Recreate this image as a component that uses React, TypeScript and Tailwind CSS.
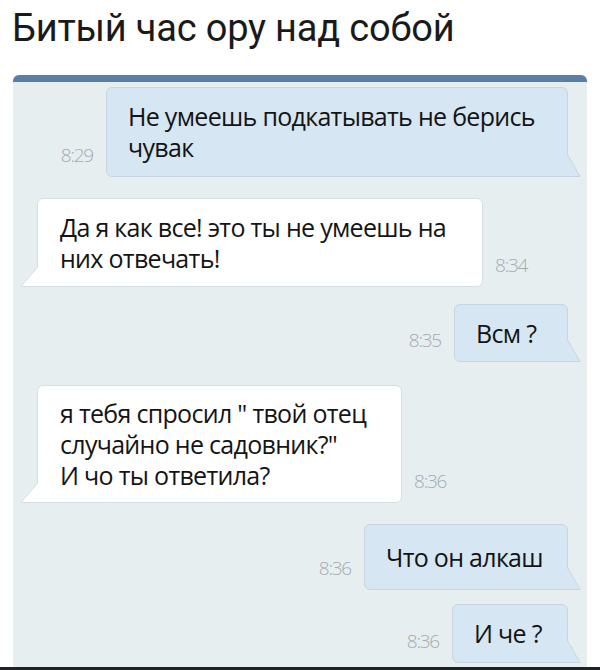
type Msg = {
  text: string[]
  time: string
  out: boolean
  w: string
  h: string
  mt: string
}

const messages: Msg[] = [
  { text: ['Не умеешь подкатывать не берись', 'чувак'], time: '8:29', out: true, w: 'w-[462px]', h: 'h-[90px]', mt: 'mt-0' },
  { text: ['Да я как все! это ты не умеешь на', 'них отвечать!'], time: '8:34', out: false, w: 'w-[446px]', h: 'h-[89px]', mt: 'mt-[21px]' },
  { text: ['Всм ?'], time: '8:35', out: true, w: 'w-[114px]', h: 'h-[58px]', mt: 'mt-[17px]' },
  { text: ['я тебя спросил " твой отец', 'случайно не садовник?"', 'И чо ты ответила?'], time: '8:36', out: false, w: 'w-[365px]', h: 'h-[118px]', mt: 'mt-[23px]' },
  { text: ['Что он алкаш'], time: '8:36', out: true, w: 'w-[204px]', h: 'h-[66px]', mt: 'mt-[21px]' },
  { text: ['И че ?'], time: '8:36', out: true, w: 'w-[116px]', h: 'h-[59px]', mt: 'mt-[14px]' },
]

function Time({ value }: { value: string }) {
  return (
    <div className="pb-[11px] text-[19px] leading-[22px] font-light tracking-[-1.2px] text-[#a3acb1]">
      {value}
    </div>
  )
}

function Bubble({ m }: { m: Msg }) {
  return (
    <div
      className={`relative flex flex-col justify-center border ${m.w} ${m.h} ${
        m.out
          ? 'bg-[#d6e6f2] border-[#c6d5df] rounded-md rounded-br-none pl-[21px]'
          : 'bg-white border-[#d6dee3] rounded-md rounded-bl-none pl-[22px]'
      }`}
    >
      {m.text.map((line) => (
        <div key={line} className="text-[25px] leading-[31px] font-medium text-[#141414] whitespace-nowrap tracking-[-0.7px]">
          {line}
        </div>
      ))}
      {m.out ? (
        <svg className="absolute -right-[14px] -bottom-[1px]" width="15" height="24" viewBox="0 0 15 24">
          <polygon points="0,0 13.5,23 0,23" fill="#d6e6f2" />
          <polyline points="1,0.5 14,23.5 0,23.5" fill="none" stroke="#c6d5df" strokeWidth="1" />
        </svg>
      ) : (
        <svg className="absolute -left-[18px] -bottom-[1px]" width="19" height="21" viewBox="0 0 19 21">
          <polygon points="19,0 1.5,20 19,20" fill="#ffffff" />
          <polyline points="18,0.5 1,20.5 19,20.5" fill="none" stroke="#d6dee3" strokeWidth="1" />
        </svg>
      )}
    </div>
  )
}

export default function App() {
  return (
    <div className="w-[600px] h-[670px] bg-white overflow-hidden flex flex-col">
      <h1 className="pt-[6px] pl-[12px] text-[38px] leading-[45px] text-[#1a1a1a] tracking-[-0.2px] font-['Roboto',sans-serif]">
        Битый час ору над собой
      </h1>
      <div className="mt-[24px] mx-[13px] flex-1 flex flex-col bg-[#e7eef0] rounded-t-md overflow-hidden">
        <div className="h-[7px] bg-[#5a7ea6]" />
        <div className="pt-[5px] font-['Open_Sans',sans-serif]">
          {messages.map((m, i) =>
            m.out ? (
              <div key={i} className={`flex justify-end items-end gap-[13px] pr-[19px] ${m.mt}`}>
                <Time value={m.time} />
                <Bubble m={m} />
              </div>
            ) : (
              <div key={i} className={`flex items-end gap-[12px] pl-[24px] ${m.mt}`}>
                <Bubble m={m} />
                <Time value={m.time} />
              </div>
            ),
          )}
        </div>
      </div>
      <div className="h-[3px] bg-[#1e2226]" />
    </div>
  )
}
